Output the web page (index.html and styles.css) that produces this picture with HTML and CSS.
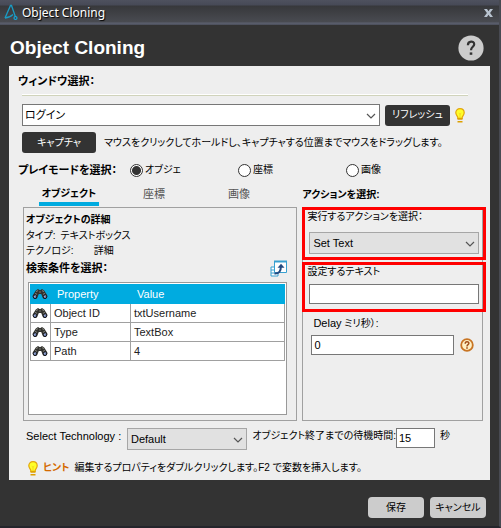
FILE: index.html
```
<!DOCTYPE html>
<html lang="ja">
<head>
<meta charset="UTF-8">
<title>Object Cloning</title>
<link rel="stylesheet" href="styles.css">
</head>
<body>
<svg class="sprite" aria-hidden="true">
	<symbol id="bulb" viewBox="0 0 10 15">
		<path d="M5 .7C2.400.7.8 2.500.8 4.800c0 1.700 1 2.600 1.700 3.700.3.600.3 1.200.3 1.800h4.400c0-.6 0-1.200.3-1.800.7-1.100 1.700-2 1.700-3.700C9.200 2.500 7.600.7 5 .7z" fill="#ffff28" stroke="#e3a60c" stroke-width="1.200"/>
		<path d="M3.700 5.200L5 6.200l1.300-1M5 6.200V10" fill="none" stroke="#f1c61c" stroke-width=".7"/>
		<path d="M2.500 11h5M2.500 13.800h5" stroke="#dda000" stroke-width="1.600"/>
	</symbol>
	<symbol id="binoculars" viewBox="0 0 16 12">
		<path d="M3.800 2.500L6 1l1.500 1h1L10 1l2.200 1.500 3 4.800c1.300 3-3.700 5.300-4.700 2L9.200 6H6.800L5.500 9.300c-1 3.300-6 1-4.700-2z" fill="#33332f"/>
		<path d="M4 3.600l2-1M10 2.600l2 1M7.200 4h1.600M3 5.500l2 .8M11 6.300l2-.8" stroke="#85857b" stroke-width="1"/>
		<ellipse cx="3" cy="8.700" rx="1.700" ry="1.900" fill="#7387ba" stroke="#15161b"/>
		<ellipse cx="13" cy="8.700" rx="1.700" ry="1.900" fill="#7387ba" stroke="#15161b"/>
		<path d="M2.300 8.600l1-1M12.300 8.600l1-1" stroke="#d5def5" stroke-width=".8"/>
	</symbol>
	<symbol id="chevron" viewBox="0 0 10 6">
		<path d="M1 1l4 4 4-4" fill="none" stroke="#555" stroke-width="1.200"/>
	</symbol>
</svg>

<div class="window">
	<div class="titlebar">
		<svg class="logo" viewBox="0 0 14 17">
			<path d="M1 14L6.500 1.500h1L11.500 13M1 14c3.500-.2 6-1.500 8-3.500" fill="none" stroke="#1a9cc4" stroke-width="1.300"/>
			<circle cx="11.500" cy="14" r="1.500" fill="none" stroke="#12a9dc" stroke-width="1.200"/>
		</svg>
		<span class="titlebar-text">Object Cloning</span>
		<button class="close" type="button" aria-label="Close">
			<svg viewBox="0 0 9 8"><path d="M0 0h3l1.500 2.300L6 0h3L6.100 4 9 8H6L4.500 5.700 3 8H0l2.900-4z" fill="#b8c3cf"/></svg>
		</button>
	</div>

	<div class="header">
		<h1>Object Cloning</h1>
		<button class="help" type="button" aria-label="Help">
			<svg viewBox="0 0 26 26">
				<circle cx="13" cy="13" r="12.600" fill="#ccc"/>
				<path d="M9.900 10.300C9.900 5.500 16.200 5.600 16.200 9.300c0 2.600-3.200 2.500-3.200 6" fill="none" stroke="#333" stroke-width="2.200"/>
				<path d="M11.700 17.400h2.600v2.400h-2.600z" fill="#333"/>
			</svg>
		</button>
	</div>

	<form class="content">
		<h2 class="section-title">ウィンドウ選択：</h2>
		<hr>
		<div class="window-row">
			<div class="select-box">
				<select class="white" aria-label="ウィンドウ選択"><option>ログイン</option></select>
				<svg class="chevron"><use href="#chevron"/></svg>
			</div>
			<button class="btn-dark refresh" type="button">リフレッシュ</button>
			<svg class="bulb"><use href="#bulb"/></svg>
		</div>
		<div class="capture-row">
			<button class="btn-dark capture" type="button">キャプチャ</button>
			<span>マウスをクリックしてホールドし、キャプチャする位置までマウスをドラッグします。</span>
		</div>
		<div class="mode-row">
			<h2 class="section-title">プレイモードを選択：</h2>
			<label><input type="radio" name="mode" checked>オブジェ</label>
			<label><input type="radio" name="mode">座標</label>
			<label><input type="radio" name="mode">画像</label>
		</div>

		<div class="columns">
			<div class="column">
				<div class="tabs">
					<button class="tab active" type="button">オブジェクト</button>
					<button class="tab" type="button">座標</button>
					<button class="tab" type="button">画像</button>
				</div>
				<div class="box details">
					<h2>オブジェクトの詳細</h2>
					<p><span>タイプ:</span>テキストボックス</p>
					<p class="technology"><span>テクノロジ:</span>詳細</p>
					<div class="search-head">
						<h2>検索条件を選択：</h2>
						<button class="popout" type="button" aria-label="Open">
							<svg viewBox="0 0 17 17">
								<path d="M1 7h7v9H1zM1 10h7M1 13h7" fill="#fff" stroke="#38a0d0"/>
								<path d="M4.500 1.500h12v11h-12z" fill="#fff" stroke="#38a0d0"/>
								<path d="M4 1.500h13" stroke="#38a0d0" stroke-width="2"/>
								<path d="M4.500 13.500c4.500.3 6.500-2.500 6.300-6.500" fill="none" stroke="#234a80" stroke-width="2"/>
								<path d="M7.500 7.800L11 3.800l3.500 4z" fill="#234a80"/>
							</svg>
						</button>
					</div>
					<div class="table-box">
						<table>
							<thead>
								<tr><th><svg class="bino"><use href="#binoculars"/></svg></th><th>Property</th><th>Value</th></tr>
							</thead>
							<tbody>
								<tr><td><svg class="bino"><use href="#binoculars"/></svg></td><td>Object ID</td><td>txtUsername</td></tr>
								<tr><td><svg class="bino"><use href="#binoculars"/></svg></td><td>Type</td><td>TextBox</td></tr>
								<tr><td><svg class="bino"><use href="#binoculars"/></svg></td><td>Path</td><td>4</td></tr>
							</tbody>
						</table>
					</div>
				</div>
			</div>

			<div class="column">
				<h2 class="action-title">アクションを選択:</h2>
				<div class="box actions">
					<div class="marked">
						<label for="action">実行するアクションを選択：</label>
						<div class="select-box">
							<select id="action"><option>Set Text</option></select>
							<svg class="chevron"><use href="#chevron"/></svg>
						</div>
					</div>
					<div class="marked">
						<label for="text">設定するテキスト</label>
						<input type="text" id="text">
					</div>
					<div class="delay">
						<label for="delay"><span class="latin">Delay</span> ミリ秒）:</label>
						<div class="delay-row">
							<input type="text" id="delay" value="0">
							<svg class="info" viewBox="0 0 14 14">
								<circle cx="7" cy="7" r="5.800" fill="#fff0c4" stroke="#c87524" stroke-width="1.800"/>
								<path d="M5.200 5.700c0-2.700 3.700-2.500 3.700-.4C8.900 6.800 7 6.500 7 8.400" fill="none" stroke="#a04c16" stroke-width="1.400"/>
								<path d="M6.200 9.300h1.600v1.500H6.200z" fill="#a04c16"/>
							</svg>
						</div>
					</div>
				</div>
			</div>
		</div>

		<div class="tech-row">
			<label class="latin" for="tech">Select Technology :</label>
			<div class="select-box">
				<select id="tech"><option>Default</option></select>
				<svg class="chevron"><use href="#chevron"/></svg>
			</div>
			<label class="wait" for="wait">オブジェクト終了までの待機時間:</label>
			<input type="text" id="wait" value="15">
			<span class="unit">秒</span>
		</div>
		<p class="hint">
			<svg class="bulb"><use href="#bulb"/></svg>
			<b>ヒント</b>
			<span>編集するプロパティをダブルクリックします。F2 で変数を挿入します。</span>
		</p>
	</form>

	<div class="footer">
		<button class="btn-light" type="button">保存</button>
		<button class="btn-light" type="button">キャンセル</button>
	</div>
</div>
</body>
</html>
```
FILE: styles.css
```
*{box-sizing: border-box;}
body{
	margin: 0;
	background: #333;
	color: #000;
	font: 10px/16px "Liberation Sans", "Noto Sans CJK JP", sans-serif;
	font-feature-settings: "palt";
}
h1, h2, p{margin: 0;}
h2{
	font-size: 10px;
	line-height: 16px;
}
button, input, select{
	font: inherit;
	font-feature-settings: inherit;
	color: inherit;
	margin: 0;
}
button{
	border: none;
	padding: 0;
	background: none;
}
svg{
	display: block;
	flex: none;
}
.sprite{
	position: absolute;
	width: 0;
	height: 0;
}
.window{
	min-height: 100vh;
	display: flex;
	flex-direction: column;
	border-right: 2px solid #484a52;
	border-bottom: 2px solid #24252b;
}
.titlebar{
	height: 25px;
	display: flex;
	align-items: center;
	padding: 0 6px 0 4px;
	background: linear-gradient(#4e515e 0, #474a57 5px, #37383b 6px, #494b51 22px, #5d6170 23px, #4a4d59 25px);
}
.logo{
	width: 14px;
	height: 17px;
}
.titlebar-text{
	flex: 1;
	padding-left: 4px;
	color: #fff;
	font: 12px/24px "Noto Sans", sans-serif;
	text-shadow: 1px 1px 1px #000;
}
.close svg{
	width: 9px;
	height: 8px;
}
.header{
	height: 41px;
	display: flex;
	align-items: center;
	justify-content: space-between;
	padding: 4px 15px 0 10px;
}
h1{
	color: #fff;
	font-size: 19px;
	line-height: 34px;
}
.help svg{
	width: 26px;
	height: 26px;
}
.content{
	margin: 0 9px;
	padding: 7px 6px 4px 13px;
	background: #eee;
}
.section-title{
	margin-left: -4px;
	font-size: 11px;
}
hr{
	height: 2px;
	margin: 5px 16px 8px 0;
	border: none;
	border-top: 1px solid #fff;
	background: #d0d3bb;
}
.window-row{
	display: flex;
	align-items: center;
	margin-right: 19px;
}
.window-row .select-box{flex: 1;}
.select-box{
	position: relative;
}
select, input[type=text]{
	width: 100%;
	height: 22px;
	padding: 0 3px;
	border: 1px solid #777;
	border-radius: 0;
	background: #fff;
	font-size: 11px;
}
select{
	appearance: none;
	border-color: #a6a6a6;
	background: #e1e1e1;
}
select.white{
	padding: 0 2px;
	border-color: #777;
	background: #fff;
}
.chevron{
	position: absolute;
	right: 4px;
	top: 9px;
	width: 10px;
	height: 6px;
	pointer-events: none;
}
.btn-dark{
	height: 21px;
	border-radius: 3px;
	background: #333;
	color: #fff;
}
.refresh{
	width: 65px;
	margin: 0 5px;
}
.bulb{
	width: 10px;
	height: 15px;
}
.capture-row{
	display: flex;
	align-items: center;
	gap: 8px;
	margin-top: 6px;
	white-space: nowrap;
}
.capture{width: 74px;}
.mode-row{
	display: grid;
	grid-template-columns: 108fr 108fr 108fr 138fr;
	align-items: center;
	height: 34px;
	margin-bottom: -2px;
	white-space: nowrap;
}
.mode-row label{
	display: flex;
	align-items: center;
	gap: 2px;
}
input[type=radio]{
	appearance: none;
	width: 13px;
	height: 13px;
	border: 1px solid #333;
	border-radius: 50%;
	background: #fff;
}
input[type=radio]:checked{
	background: radial-gradient(#333 0, #333 4px, #fff 5px);
}
.columns{
	display: grid;
	grid-template-columns: 275fr 181fr;
	gap: 5px;
	margin: 0 1px;
}
.column{
	display: flex;
	flex-direction: column;
	min-width: 0;
}
.tabs{
	display: flex;
	height: 22px;
	padding-left: 16px;
}
.tab{
	width: 60px;
	border-bottom: 4px solid transparent;
	color: #555;
	font-size: 11px;
	line-height: 14px;
	white-space: nowrap;
}
.tab + .tab{margin-left: 25px;}
.tab.active{
	height: 21px;
	border-color: #00abe0;
	color: #000;
	font-size: 10px;
	font-weight: bold;
}
.box{
	flex: 1;
	border: 1px solid #a0a0a0;
}
.details{
	min-height: 214px;
	padding: 4px 9px 5px 2px;
	display: flex;
	flex-direction: column;
}
.details p{line-height: 15px;}
.details p span{margin-right: 5px;}
.details .technology span{margin-right: 20px;}
.search-head{
	display: flex;
	align-items: center;
	justify-content: space-between;
	height: 20px;
}
.search-head h2{font-size: 11px;}
.popout svg{
	width: 17px;
	height: 17px;
}
.table-box{
	flex: 1;
	margin: 4px 0 0 2px;
	padding: 1px;
	border: 1px solid #999;
	background: #fff;
}
table{
	width: 100%;
	border-collapse: collapse;
	table-layout: fixed;
	font-size: 11px;
	line-height: 18px;
	color: #222;
}
th, td{
	padding: 0 3px;
	border: 1px solid #a0a0a0;
	text-align: left;
	font-weight: normal;
}
th{
	padding-left: 6px;
	border-color: #00abe0;
	background: #00abe0;
	color: #fff;
}
th + th{border-left-color: #fff;}
th:first-child, td:first-child{
	width: 20px;
	padding: 0 1px;
}
th:nth-child(2){width: 80px;}
.bino{
	width: 16px;
	height: 12px;
}
.action-title{
	height: 22px;
	line-height: 20px;
}
.marked{
	margin: -1px -4px 3px -1px;
	padding: 0 4px 3px 4px;
	border: 3px solid #f00;
}
.marked label{
	display: block;
	margin-left: -2px;
	line-height: 14px;
}
.marked .select-box{margin-top: 8px;}
.marked input[type=text]{
	height: 20px;
	margin: 5px 0 2px;
}
.delay{
	padding: 0 8px;
}
.delay label{
	display: block;
	padding: 0 0 3px 2px;
}
.delay-row{
	display: flex;
	align-items: center;
	gap: 6px;
}
.delay-row input[type=text]{
	height: 20px;
	padding: 0 2px;
}
.info{
	width: 14px;
	height: 14px;
}
.latin{font-size: 11px;}
.tech-row{
	display: flex;
	align-items: flex-start;
	margin: 7px 0 0 4px;
	white-space: nowrap;
}
.tech-row > .latin{
	width: 101px;
}
.tech-row .select-box{width: 120px;}
.wait{
	margin-left: auto;
}
.tech-row input[type=text]{
	width: 39px;
	height: 20px;
	padding: 0 2px;
}
.unit{width: 49px; padding-left: 5px;}
.hint{
	display: flex;
	align-items: center;
	gap: 5px;
	margin: 10px 0 0 6px;
	white-space: nowrap;
}
.hint b{color: #d46a00;}
.footer{
	display: flex;
	gap: 6px;
	justify-content: flex-end;
	padding: 17px 13px 8px;
}
.btn-light{
	width: 56px;
	height: 21px;
	border-radius: 4px;
	background: #ccc;
}
```
